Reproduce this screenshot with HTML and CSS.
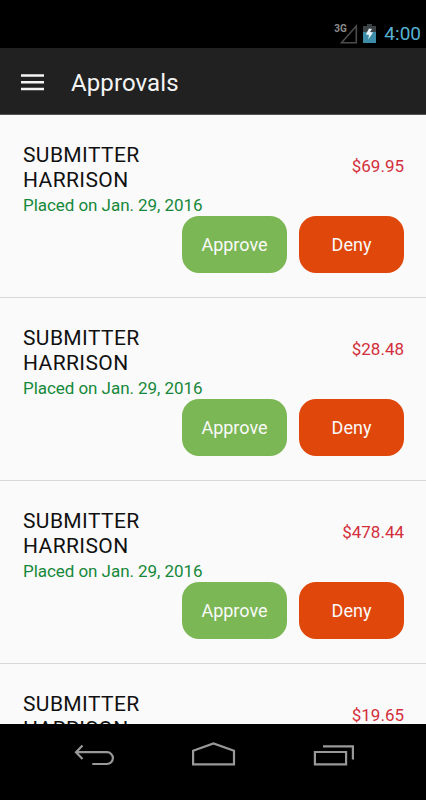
FILE: index.html
```
<!DOCTYPE html>
<html>
  <head>
  <meta charset="utf-8">
  <title>Approvals</title>
  <link rel="stylesheet" href="styles.css">
  </head>

  <body>
  <div class="screen">
    <div class="status">
      <svg class="signal" width="24" height="24" viewBox="0 0 24 24">
        <path d="M7.5 22.8 L22.3 6 V22.8 Z" fill="none" stroke="#4c4c4c" stroke-width="1.6"/>
        <text class="net" x="0.2" y="12.3">3G</text>
      </svg>
      <svg class="battery" width="13" height="20" viewBox="0 0 13 20">
        <path d="M4 0h5v2h4v7H0V2h4z" fill="#3c4347"/>
        <path d="M0 8h13v11H0z" fill="#3d8ca8"/>
        <path d="M6 4.5 L2.8 10.5 L6 11 L5.2 15.5 L10 8.5 L7 8 L9 5z" fill="#e8f4f8"/>
      </svg>
      <span class="clock">4:00</span>
    </div>

    <div class="header">
      <svg class="menu" width="23" height="17" viewBox="0 0 23 17">
        <path d="M0 1.5h23M0 8.2h23M0 15h23" stroke="#f4f4f4" stroke-width="2.4"/>
      </svg>
      <span class="title">Approvals</span>
    </div>

    <div class="list">
      <div class="item">
        <div class="info">
          <div class="name">SUBMITTER HARRISON</div>
          <div class="amount">$69.95</div>
        </div>
        <div class="date">Placed on Jan. 29, 2016</div>
        <div class="buttons">
          <button class="approve">Approve</button>
          <button class="deny">Deny</button>
        </div>
      </div>
      <div class="item">
        <div class="info">
          <div class="name">SUBMITTER HARRISON</div>
          <div class="amount">$28.48</div>
        </div>
        <div class="date">Placed on Jan. 29, 2016</div>
        <div class="buttons">
          <button class="approve">Approve</button>
          <button class="deny">Deny</button>
        </div>
      </div>
      <div class="item">
        <div class="info">
          <div class="name">SUBMITTER HARRISON</div>
          <div class="amount">$478.44</div>
        </div>
        <div class="date">Placed on Jan. 29, 2016</div>
        <div class="buttons">
          <button class="approve">Approve</button>
          <button class="deny">Deny</button>
        </div>
      </div>
      <div class="item">
        <div class="info">
          <div class="name">SUBMITTER HARRISON</div>
          <div class="amount">$19.65</div>
        </div>
      </div>
    </div>

    <div class="nav">
      <svg width="40" height="24" viewBox="0 0 40 24">
        <path d="M8.5 1.5 L2 8.2 L8.5 15 M2.5 8.2 H33 A5.9 5.9 0 0 1 33 20 H18.3" />
      </svg>
      <svg width="44" height="24" viewBox="0 0 44 24">
        <path d="M1.1 20.4 V6.8 L21.5 -0.5 L42 6.8 V20.4 Z" />
      </svg>
      <svg width="42" height="24" viewBox="0 0 42 24">
        <path d="M1.9 8 H33.1 V20.4 H1.9 Z M10 2.4 H39.9 V15.6" />
      </svg>
    </div>
  </div>
  </body>
</html>
```
FILE: styles.css
```
body {
  margin: 0;
  background: #000;
  font-family: Roboto, sans-serif;
}

.screen {
  display: flex;
  flex-direction: column;
  width: 426px;
  height: 800px;
  overflow: hidden;
}

/* android status bar */
.status {
  display: flex;
  justify-content: flex-end;
  box-sizing: border-box;
  height: 48px;
  padding: 20px 5px 0 0;
  background: #000;
}

.signal {
  margin-right: 5px;
}

.net {
  font-size: 10px;
  font-weight: bold;
  fill: #8c8c8c;
}

.battery {
  margin: 4px 8px 0 0;
}

.clock {
  font-size: 19px;
  line-height: 28px;
  color: #56b2d2;
}

.header {
  display: flex;
  align-items: center;
  box-sizing: border-box;
  height: 67px;
  padding: 2px 21px 0;
  background: #212121;
  border-bottom: 1px solid #555;
}

.title {
  margin-left: 27px;
  padding-top: 2px;
  font-size: 24px;
  letter-spacing: 0.1px;
  color: #f4f4f4;
}

.list {
  height: 609px;
  overflow: hidden;
  background: #fafafa;
}

.item {
  box-sizing: border-box;
  height: 183px;
  padding: 28px 22px 0 23px;
  border-bottom: 1px solid #d9d9d9;
}

.info {
  display: flex;
  justify-content: space-between;
  align-items: center;
}

.name {
  width: 140px;
  font-size: 21px;
  line-height: 25px;
  letter-spacing: 0.4px;
  color: #111;
}

.amount {
  padding-bottom: 5px;
  font-size: 17px;
  color: #d32f3c;
}

.date {
  margin-bottom: -2px;
  font-size: 17px;
  line-height: 25px;
  letter-spacing: -0.05px;
  color: #16883a;
}

.buttons {
  display: flex;
  justify-content: flex-end;
  gap: 12px;
}

button {
  width: 105px;
  height: 57px;
  padding: 0;
  border: none;
  border-radius: 17px;
  font-family: inherit;
  font-size: 18px;
  color: #fafafa;
}

.approve {
  background: #7cb755;
}

.deny {
  background: #df470b;
}

.nav {
  display: flex;
  justify-content: space-between;
  height: 52px;
  padding: 20px 71px 0 74px;
  background: #000;
}

.nav svg {
  overflow: visible;
  fill: none;
  stroke: #999;
  stroke-width: 2.2;
}
```
